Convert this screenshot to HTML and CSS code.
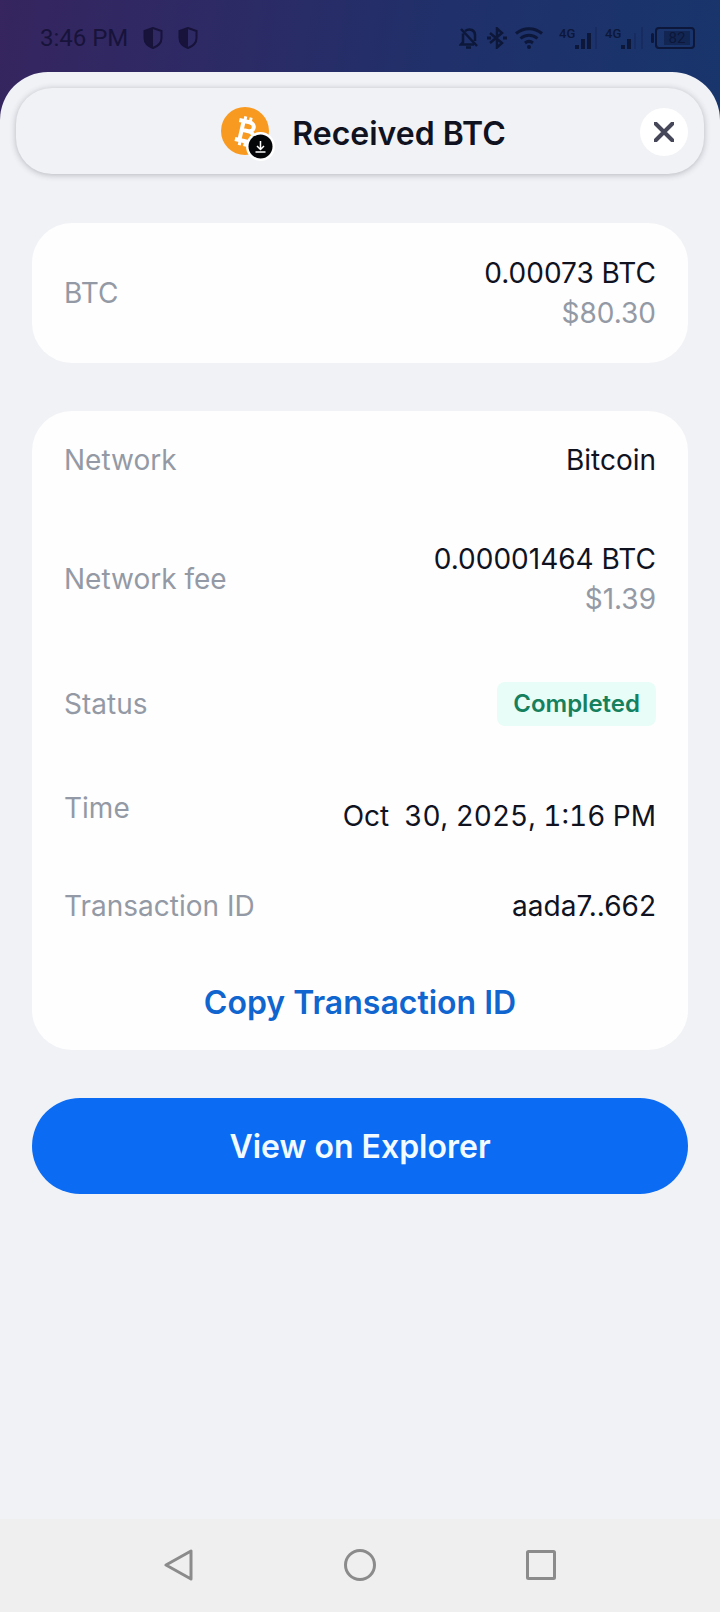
FILE: index.html
```html
<!DOCTYPE html>
<html lang="en">
<head>
<meta charset="utf-8">
<meta name="viewport" content="width=device-width, initial-scale=1">
<title>Received BTC</title>
<link rel="stylesheet" href="styles.css">
</head>
<body>
<div class="screen">
  <div class="status-bar">
    <div class="status-left">
      <span class="clock">3:46 PM</span>
      <svg class="shield" viewBox="0 0 20 22"><path d="M10 1 1.500 4v7c0 4.500 3 8 8.500 10 5.500-2 8.500-5.500 8.500-10V4z" fill="none" stroke="currentColor" stroke-width="2"/><path d="M10 1 1.500 4v7c0 4.500 3 8 8.500 10z" fill="currentColor"/></svg>
      <svg class="shield" viewBox="0 0 20 22"><path d="M10 1 1.500 4v7c0 4.500 3 8 8.500 10 5.500-2 8.500-5.500 8.500-10V4z" fill="none" stroke="currentColor" stroke-width="2"/><path d="M10 1 1.500 4v7c0 4.500 3 8 8.500 10z" fill="currentColor"/></svg>
    </div>
    <div class="status-right">
      <svg width="20" height="22" viewBox="0 0 20 22" fill="none" stroke="currentColor" stroke-width="2.500"><path d="M4 6.500V15l-2 2.500h13M6 4c5-3.500 10-.500 10 4v6M2 2l16 17M7 20.500h5"/></svg>
      <svg width="20" height="22" viewBox="0 0 20 22" fill="none" stroke="currentColor" stroke-width="2.500"><path d="m3 6 12 10-5 4.500v-19L15 6 3 16"/><path d="M0 11h4M16 11h4" stroke-width="3"/></svg>
      <svg width="28" height="22" viewBox="0 0 28 22" fill="none" stroke="currentColor" stroke-width="3"><path d="M1 6.500c7.500-6.500 18.500-6.500 26 0M5.500 11.500c5-4.500 12-4.500 17 0M10 16c2.500-2 5.500-2 8 0"/><circle cx="14" cy="20" r="1" fill="currentColor" stroke-width="2"/></svg>
      <div class="signal"><span>4G</span><svg width="22" height="22" viewBox="0 0 22 22" fill="none" stroke="currentColor" stroke-width="4"><path d="M2 18v4M8 12v10M14 6v16"/><path d="M21 0v22" stroke-width="1" opacity=".4"/></svg></div>
      <div class="signal"><span>4G</span><svg width="22" height="22" viewBox="0 0 22 22" fill="none" stroke="currentColor" stroke-width="4"><path d="M2 18v4M8 12v10"/><path d="M14 6v16M21 0v22" stroke-width="1" opacity=".4"/></svg></div>
      <div class="battery"><span>82</span></div>
    </div>
  </div>

  <main class="sheet">
    <header class="header">
      <div class="title">
        <svg class="coin" viewBox="0 0 54 54">
          <circle cx="24" cy="24" r="24" fill="#f99a20"/>
          <g transform="rotate(13 24 24)" fill="none" stroke="#fff">
            <path d="M16 14.500h10.500c7 0 7 9 0 9H20M20 23.500h7.500c8 0 8 10.500 0 10.500H16M20.500 14.500V34" stroke-width="4"/>
            <path d="M21.500 9.500v5M27 9.500v5M21.500 34v5M27 34v5" stroke-width="3"/>
          </g>
          <circle cx="39.500" cy="39.500" r="14.500" fill="#fff"/>
          <circle cx="39.500" cy="39.500" r="12" fill="#050608"/>
          <path d="M39.500 34v8M36 39l3.500 3.500L43 39M34.500 45h10" fill="none" stroke="#fff" stroke-width="1.500"/>
        </svg>
        <h1>Received BTC</h1>
      </div>
      <button class="close" type="button" aria-label="Close"><svg width="20" height="20" viewBox="0 0 20 20"><path d="m1.500 1.500 17 17m0-17-17 17" fill="none" stroke="currentColor" stroke-width="4" stroke-linecap="round"/></svg></button>
    </header>

    <div class="content">
      <dl class="card">
        <div class="row"><dt>BTC</dt><dd class="stack"><span>0.00073 BTC</span><span class="muted">$80.30</span></dd></div>
      </dl>
      <section class="card">
        <dl class="list">
          <div class="row"><dt>Network</dt><dd>Bitcoin</dd></div>
          <div class="row"><dt>Network fee</dt><dd class="stack"><span>0.00001464 BTC</span><span class="muted">$1.39</span></dd></div>
          <div class="row"><dt>Status</dt><dd class="badge">Completed</dd></div>
          <div class="row row-low"><dt>Time</dt><dd>Oct  30, 2025, 1:16 PM</dd></div>
          <div class="row"><dt>Transaction ID</dt><dd>aada7..662</dd></div>
        </dl>
        <button class="copy" type="button">Copy Transaction ID</button>
      </section>
      <button class="primary" type="button">View on Explorer</button>
    </div>
  </main>

  <nav class="nav">
    <button type="button" aria-label="Back"><svg width="32" height="32" viewBox="0 0 32 32"><path d="M28 2v28L3 16z"/></svg></button>
    <button type="button" aria-label="Home"><svg width="32" height="32" viewBox="0 0 32 32"><circle cx="16" cy="16" r="14.500"/></svg></button>
    <button type="button" aria-label="Recent apps"><svg width="32" height="32" viewBox="0 0 32 32"><rect x="2.500" y="2.500" width="27" height="27" rx="1"/></svg></button>
  </nav>
</div>
</body>
</html>
```

FILE: styles.css
```css
* {
  box-sizing: border-box;
}

body {
  margin: 0;
  font-family: Inter, "Liberation Sans", sans-serif;
  font-size: 28px;
  color: #10131f;
}

h1, dl, dd {
  margin: 0;
}

button {
  border: 0;
  padding: 0;
  background: none;
  font: inherit;
  color: inherit;
}

svg {
  display: block;
  flex: none;
}

.screen {
  min-height: 100vh;
  display: flex;
  flex-direction: column;
  background: linear-gradient(100deg, #36255f 0%, #2b2b66 35%, #20306a 60%, #18356c 100%) top / 100% 130px no-repeat #f1f2f6;
}

.status-bar {
  height: 72px;
  padding: 4px 25px 0 40px;
  display: flex;
  align-items: center;
  justify-content: space-between;
  font-family: Roboto, sans-serif;
  color: #17133a;
}

.status-left {
  display: flex;
  align-items: center;
  gap: 15px;
}

.clock {
  font-size: 24px;
}

.shield {
  width: 20px;
  height: 22px;
}

.status-right {
  display: flex;
  align-items: center;
  gap: 8px;
  color: #0c173a;
}

.signal {
  display: flex;
  margin-left: 8px;
}

.signal + .signal {
  margin-left: 0;
}

.signal span {
  width: 16px;
  font-size: 13px;
  line-height: 13px;
  font-weight: 500;
}

.battery {
  position: relative;
  width: 40px;
  height: 22px;
  margin-left: 4px;
  padding: 2px 3px 2px 7px;
  border: 2px solid;
  border-radius: 4px;
  font-size: 15px;
  line-height: 14px;
}

.battery::before {
  content: "";
  position: absolute;
  left: -6px;
  top: 4px;
  width: 3px;
  height: 10px;
  border-radius: 2px;
  background: currentColor;
}

.battery span {
  display: block;
  text-align: center;
  background: rgba(12, 23, 58, 0.5);
}

.sheet {
  flex: 1;
  padding: 16px;
  border-radius: 48px 48px 0 0;
  background: #f1f2f6;
}

.header {
  position: relative;
  display: flex;
  align-items: center;
  justify-content: center;
  height: 86px;
  padding: 5px 0 0 7px;
  border-radius: 36px;
  background: #f1f2f6;
  box-shadow: 0 1px 6px rgba(40, 45, 60, 0.3);
}

.title {
  display: flex;
  align-items: center;
  gap: 17px;
}

.coin {
  width: 54px;
  height: 54px;
}

h1 {
  font-size: 32px;
  line-height: 40px;
  font-weight: 600;
}

.close {
  position: absolute;
  right: 16px;
  top: 20px;
  width: 48px;
  height: 48px;
  display: grid;
  place-items: center;
  border-radius: 50%;
  background: #fff;
  color: #464859;
}

.content {
  display: flex;
  flex-direction: column;
  gap: 48px;
  padding: 49px 16px;
}

.card {
  border-radius: 40px;
  background: #fefefe;
}

.row {
  display: flex;
  align-items: center;
  justify-content: space-between;
  padding: 30px 32px;
  line-height: 38px;
}

.row dd {
  white-space: pre;
}

.row-low {
  align-items: flex-start;
  padding-bottom: 22px;
}

.row-low dd {
  padding-top: 8px;
  font-variant-numeric: tabular-nums;
}

dt, .muted {
  color: #949aa5;
}

.row .stack {
  display: flex;
  flex-direction: column;
  text-align: right;
  line-height: 40px;
}

.row .badge {
  margin: 3px 0;
  padding: 0 16px;
  border-radius: 8px;
  background: #e8fdf7;
  color: #16805c;
  font-size: 24px;
  line-height: 44px;
  font-weight: 600;
}

.copy {
  display: block;
  width: 100%;
  padding: 28px 32px 27px;
  font-size: 32px;
  line-height: 40px;
  font-weight: 600;
  color: #1065cf;
}

.primary {
  height: 96px;
  border-radius: 48px;
  background: #0b6bf2;
  color: #f2fbff;
  font-size: 32px;
  font-weight: 600;
}

.nav {
  display: flex;
  justify-content: space-between;
  padding: 30px 163px 31px;
  background: #efefef;
}

.nav svg {
  fill: none;
  stroke: #8b8b8b;
  stroke-width: 3;
  stroke-linejoin: round;
}
```
